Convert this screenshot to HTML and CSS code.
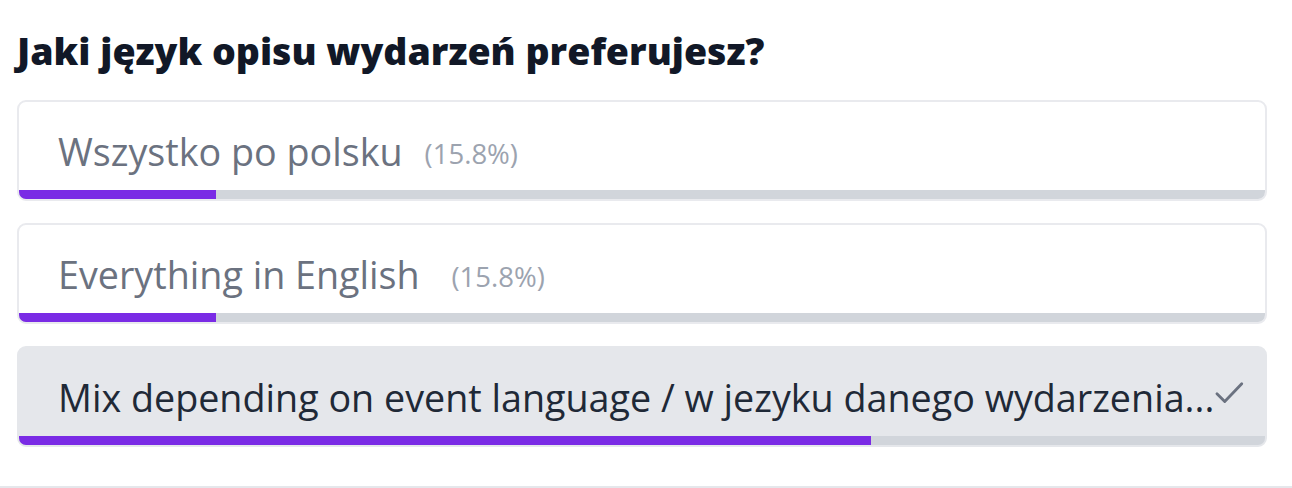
FILE: index.html
```html
<!DOCTYPE html>
<html lang="pl">
<head>
<meta charset="utf-8">
<link rel="stylesheet" href="styles.css">
</head>
<body>
<div class="poll">
  <h2 class="poll-title">Jaki język opisu wydarzeń preferujesz?</h2>
  <div class="options">
    <div class="option">
      <div class="option-body">
        <span class="option-label">Wszystko po polsku</span>
        <span class="option-pct">(15.8%)</span>
      </div>
      <div class="track"><div class="fill" style="width:15.8%"></div></div>
    </div>
    <div class="option">
      <div class="option-body">
        <span class="option-label">Everything in English&nbsp;</span>
        <span class="option-pct">(15.8%)</span>
      </div>
      <div class="track"><div class="fill" style="width:15.8%"></div></div>
    </div>
    <div class="option option-selected">
      <div class="option-body">
        <span class="option-label">Mix depending on event language / w jezyku danego wydarzenia...</span>
        <svg class="check" viewBox="0 0 24 24" width="34" height="34" aria-hidden="true"><path d="M3.5 12.5l5.5 5.5L21 5.5" fill="none" stroke="currentColor" stroke-width="2" stroke-linecap="round" stroke-linejoin="round"/></svg>
      </div>
      <div class="track"><div class="fill" style="width:68.4%"></div></div>
    </div>
  </div>
</div>
</body>
</html>
```
FILE: styles.css
```css
html, body {
  margin: 0;
  padding: 0;
  background: #ffffff;
}
body {
  font-family: "Open Sans", "Noto Sans", sans-serif;
  width: 1292px;
  height: 488px;
  overflow: hidden;
}
.poll {
  height: 486px;
  border-bottom: 2px solid #e5e7eb;
  padding: 0 25px 0 17px;
  box-sizing: content-box;
}
.poll-title {
  margin: 0;
  padding-top: 26px;
  font-size: 37.5px;
  font-weight: 800;
  line-height: 50px;
  color: #111827;
  letter-spacing: 0;
}
.options {
  margin-top: 24px;
  display: flex;
  flex-direction: column;
  gap: 22px;
}
.option {
  border: 2px solid #e9eaee;
  border-radius: 9px;
  background: #ffffff;
  overflow: hidden;
  display: flex;
  flex-direction: column;
}
.option-selected {
  background: #e5e7eb;
  border-color: #e5e7eb;
}
.option-body {
  height: 88px;
  display: flex;
  align-items: center;
  padding: 10px 26px 0 39px;
  box-sizing: border-box;
  gap: 22px;
}
.option-label {
  font-size: 37.7px;
  color: #6b7280;
  white-space: nowrap;
}
.option-selected .option-label {
  color: #1f2937;
}
.option-selected .option-body {
  gap: 0;
}
.option-pct {
  font-size: 27.5px;
  color: #9ca3af;
  padding-top: 4px;
}
.check {
  color: #6b7280;
  flex: none;
  margin-top: -8px;
  margin-left: -2px;
}
.track {
  height: 9px;
  background: #d1d5db;
}
.fill {
  height: 100%;
  background: #7a2be5;
}
```
